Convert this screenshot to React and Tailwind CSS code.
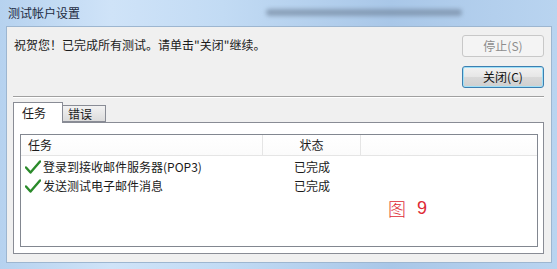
import React from "react";

const cjk = { fontFamily: '"Noto Sans CJK SC", "Microsoft YaHei", sans-serif' };

const Check = () => (
  <svg width="16" height="14" viewBox="0 0 16 14" className="shrink-0">
    <path d="M1 7.5 L5.5 12.5 L15 1.5" fill="none" stroke="#2a8a2a" strokeWidth="2.4" strokeLinejoin="round" strokeLinecap="round" />
  </svg>
);

export default function App() {
  const rows = [
    { task: "登录到接收邮件服务器(POP3)", status: "已完成" },
    { task: "发送测试电子邮件消息", status: "已完成" },
  ];

  return (
    <div className="w-[557px] h-[269px] flex flex-col bg-[linear-gradient(90deg,#b6d2ef_0%,#cfe3f8_20%,#c2dbf4_40%,#a9c7e8_70%,#b9d4f0_100%)] text-[12px] text-[#1b1b1b]" style={cjk}>
      {/* title bar */}
      <div className="relative h-[26px] flex items-center pl-[8px]">
        <span className="text-[12px] text-[#1c2a40]">测试帐户设置</span>
        <div className="absolute left-[266px] top-[9px] w-[196px] h-[7px] rounded-full bg-[#6c7f96] opacity-60 blur-[2px]" />
      </div>

      {/* client area */}
      <div className="ml-[6px] mr-[5px] h-[237px] border border-[#9db6d0] bg-[#f0f0f0] flex flex-col pt-[8px] pl-[6px] pr-[7px]">
        <div className="flex justify-between">
          <p className="mt-[2px] ml-[1px] leading-[16px]">祝贺您！已完成所有测试。请单击"关闭"继续。</p>
          <div className="flex flex-col gap-[9px] w-[82px]">
            <button className="h-[22px] rounded-[3px] border border-[#c8c8c8] bg-[#f4f4f4] text-[#8d8d8d]">停止(S)</button>
            <button className="h-[22px] rounded-[3px] border border-[#3c7fb1] bg-[linear-gradient(#f2f2f2,#e6e6e6_50%,#d9d9d9_51%,#cfcfcf)] shadow-[inset_0_0_0_1px_#9fe0f7] text-[#111]">关闭(C)</button>
          </div>
        </div>

        <div className="mt-[8px] h-[2px] border-t border-[#a0a0a0] border-b border-b-white" />

        {/* tabs */}
        <div className="mt-[3px] flex items-end h-[21px] relative z-10">
          <div className="h-[21px] w-[50px] border border-[#898c95] border-b-0 bg-white flex items-center pl-[8px] -mb-[1px] pb-[1px]">任务</div>
          <div className="h-[17px] w-[43px] border border-[#898c95] border-l-0 bg-[linear-gradient(#f2f2f2,#dcdcdc)] flex items-center pl-[5px]">错误</div>
        </div>

        {/* panel */}
        <div className="h-[132px] w-[531px] border border-[#898c95] bg-white pt-[11px] pl-[6px] pr-[5px] pb-[6px]">
          <div className="relative h-full border border-[#828790] bg-white">
            <div className="flex h-[21px] border-b border-[#e5e5e5] bg-[linear-gradient(#ffffff,#fbfbfb)]">
              <div className="w-[242px] pl-[7px] flex items-center border-r border-[#e5e5e5]">任务</div>
              <div className="w-[98px] flex items-center justify-center border-r border-[#e5e5e5]">状态</div>
            </div>
            <div className="pt-[1px]">
              {rows.map((r) => (
                <div key={r.task} className="flex h-[19px] items-center">
                  <div className="w-[242px] flex items-center pl-[4px] gap-[2px]">
                    <Check />
                    <span>{r.task}</span>
                  </div>
                  <div className="w-[98px] text-center">{r.status}</div>
                </div>
              ))}
            </div>
            <div className="absolute left-[367px] top-[60px] flex items-center gap-[11px] text-[#de2a35] text-[18px] font-light">
              <span>图</span>
              <span style={{ fontFamily: '"Liberation Sans", sans-serif' }}>9</span>
            </div>
          </div>
        </div>
      </div>
    </div>
  );
}
